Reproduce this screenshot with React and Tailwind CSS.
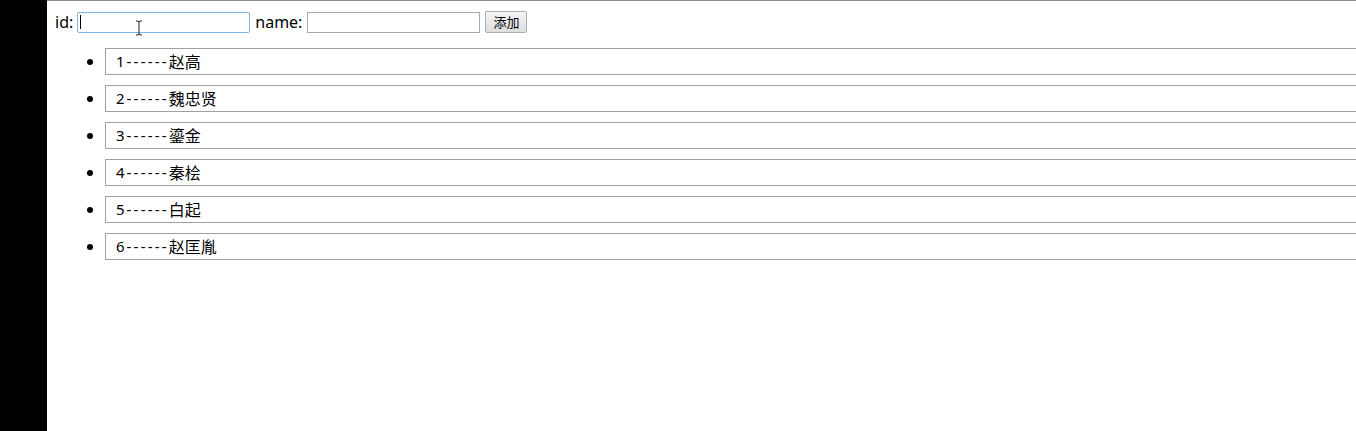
const people = [
  { id: 1, name: '赵高' },
  { id: 2, name: '魏忠贤' },
  { id: 3, name: '鎏金' },
  { id: 4, name: '秦桧' },
  { id: 5, name: '白起' },
  { id: 6, name: '赵匡胤' },
];

const font = { fontFamily: '"Noto Sans", "Noto Sans CJK SC", sans-serif' };

export default function App() {
  return (
    <div className="flex h-[431px] w-[1356px] overflow-hidden bg-white text-black" style={font}>
      <div className="w-[47px] shrink-0 bg-black" />
      <div className="relative flex-1 overflow-hidden border-t border-[#8c8c8c]">
        {/* form row */}
        <div className="flex h-[41px] items-center pl-[8px] pt-[1px] text-[16px] leading-none">
          <span>id:</span>
          <div className="ml-[4px] flex h-[21px] w-[173px] items-center rounded-[2px] border border-[#7eb4ea] bg-white pl-[2px]">
            <span className="h-[14px] w-px bg-black" />
          </div>
          <span className="ml-[5px]">name:</span>
          <div className="ml-[5px] h-[21px] w-[173px] border border-[#a9a9a9] bg-white" />
          <button className="ml-[5px] h-[22px] w-[42px] rounded-[2px] border border-[#adadad] bg-gradient-to-b from-[#f4f4f4] to-[#dedede] text-[13px] leading-none">
            添加
          </button>
        </div>

        {/* mouse cursor */}
        <svg className="absolute left-[88px] top-[19px]" width="8" height="16" viewBox="0 0 8 16">
          <path d="M1 1h2l1 1 1-1h2M4 2v12M1 15h2l1-1 1 1h2" fill="none" stroke="#222" strokeWidth="1" />
        </svg>

        {/* list */}
        <ul className="mt-[6px] flex flex-col gap-[10px]">
          {people.map((p) => (
            <li key={p.id} className="flex items-center">
              <span className="ml-[40px] h-[6px] w-[6px] shrink-0 rounded-full bg-black" />
              <div className="ml-[12px] flex h-[27px] w-[1300px] shrink-0 items-center border border-[#a0a0a0] pl-[10px] text-[15px]">
                <span className="pr-[2px]">{p.id}</span>
                <span className="tracking-[2.2px]">------</span>
                <span className="text-[16px]">{p.name}</span>
              </div>
            </li>
          ))}
        </ul>
      </div>
    </div>
  );
}
